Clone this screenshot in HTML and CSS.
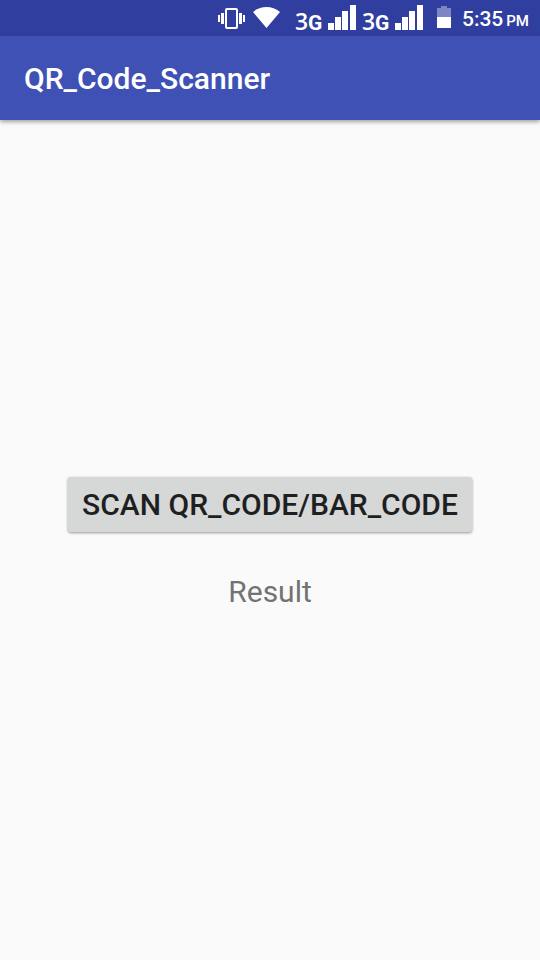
FILE: index.html
```html
<!DOCTYPE html>
<html lang="en">
<head>
<meta charset="utf-8">
<meta name="viewport" content="width=device-width, initial-scale=1">
<title>QR_Code_Scanner</title>
<link rel="stylesheet" href="styles.css">
</head>
<body>
<div class="status-bar">
  <svg class="vibrate" width="27" height="22" viewBox="0 0 27 22" aria-hidden="true">
    <rect x="8" y="1" width="11" height="19" rx="1" fill="none" stroke="#fff" stroke-width="2"/>
    <path d="M0 7h2v7H0zM3 5h3v11H3zM21 5h3v11h-3zM25 7h2v7h-2z" fill="#fff"/>
  </svg>
  <svg class="wifi" width="27" height="23" viewBox="0 0 27 23" aria-hidden="true">
    <path d="M0 5C8-1.600 19-1.600 27 5L13.500 21z" fill="#fff"/>
  </svg>
  <div class="signal">
    <span class="network"><span class="digit">3</span>G</span>
    <svg width="28" height="25" viewBox="0 0 28 25" aria-hidden="true">
      <path d="M0 18h6v7H0zM7 12h6v13H7zM14 6h6v19h-6zM22 0h6v25h-6z" fill="#fff"/>
    </svg>
  </div>
  <div class="signal">
    <span class="network"><span class="digit">3</span>G</span>
    <svg width="28" height="25" viewBox="0 0 28 25" aria-hidden="true">
      <path d="M0 18h6v7H0zM7 12h6v13H7zM14 6h6v19h-6zM22 0h6v25h-6z" fill="#fff"/>
    </svg>
  </div>
  <svg class="battery" width="14" height="24" viewBox="0 0 14 24" aria-hidden="true">
    <path d="M4 0h6v2h4v9H0V2h4z" fill="#7d86c3"/>
    <path d="M0 11h14v11H0z" fill="#fff"/>
  </svg>
  <div class="clock">5:35<span class="period">PM</span></div>
</div>
<header class="app-bar">
  <h1 class="title">QR_Code_Scanner</h1>
</header>
<main class="content">
  <button class="scan" type="button">SCAN QR_CODE/BAR_CODE</button>
  <p class="result">Result</p>
</main>
</body>
</html>
```
FILE: styles.css
```css
* {
  box-sizing: border-box;
}

body {
  margin: 0;
  min-height: 100vh;
  display: flex;
  flex-direction: column;
  background: #fafafa;
  font-family: Roboto, "Liberation Sans", sans-serif;
}

svg {
  display: block;
  flex: none;
}

.status-bar {
  display: flex;
  justify-content: flex-end;
  align-items: flex-end;
  height: 36px;
  padding: 0 11px 6px 0;
  background: #303f9f;
  color: #fff;
}

.vibrate {
  margin-right: 8px;
}

.wifi {
  margin-right: 15px;
}

.signal {
  display: flex;
  align-items: flex-end;
  justify-content: space-between;
  width: 61px;
  margin-right: 6px;
}

.network {
  font-size: 21px;
  line-height: 14px;
  font-weight: 700;
}

.digit {
  font-family: "Open Sans", sans-serif;
  font-size: 23px;
  font-weight: 600;
}

.battery {
  margin: 0 11px 0 8px;
}

.clock {
  font-size: 21px;
  line-height: 18px;
  font-weight: 500;
}

.period {
  margin-left: 3px;
  font-size: 15px;
}

.app-bar {
  display: flex;
  align-items: center;
  height: 84px;
  padding: 2px 24px 0;
  background: #3f51b5;
  box-shadow: 0 2px 4px rgba(0, 0, 0, 0.35);
}

.title {
  margin: 0;
  color: #fff;
  font-size: 30px;
  line-height: 36px;
  font-weight: 500;
}

.content {
  flex: 1;
  display: flex;
  flex-direction: column;
  align-items: center;
  justify-content: center;
  gap: 42px;
  padding-top: 6px;
}

.scan {
  padding: 10px 14px 9px;
  border: 0;
  border-radius: 3px;
  background: #d6d7d7;
  box-shadow: 0 1px 3px rgba(0, 0, 0, 0.4);
  color: #1e1f1f;
  font-family: inherit;
  font-size: 30px;
  line-height: 36px;
  font-weight: 500;
}

.result {
  margin: 0;
  color: #737373;
  font-size: 30px;
  line-height: 36px;
}
```
